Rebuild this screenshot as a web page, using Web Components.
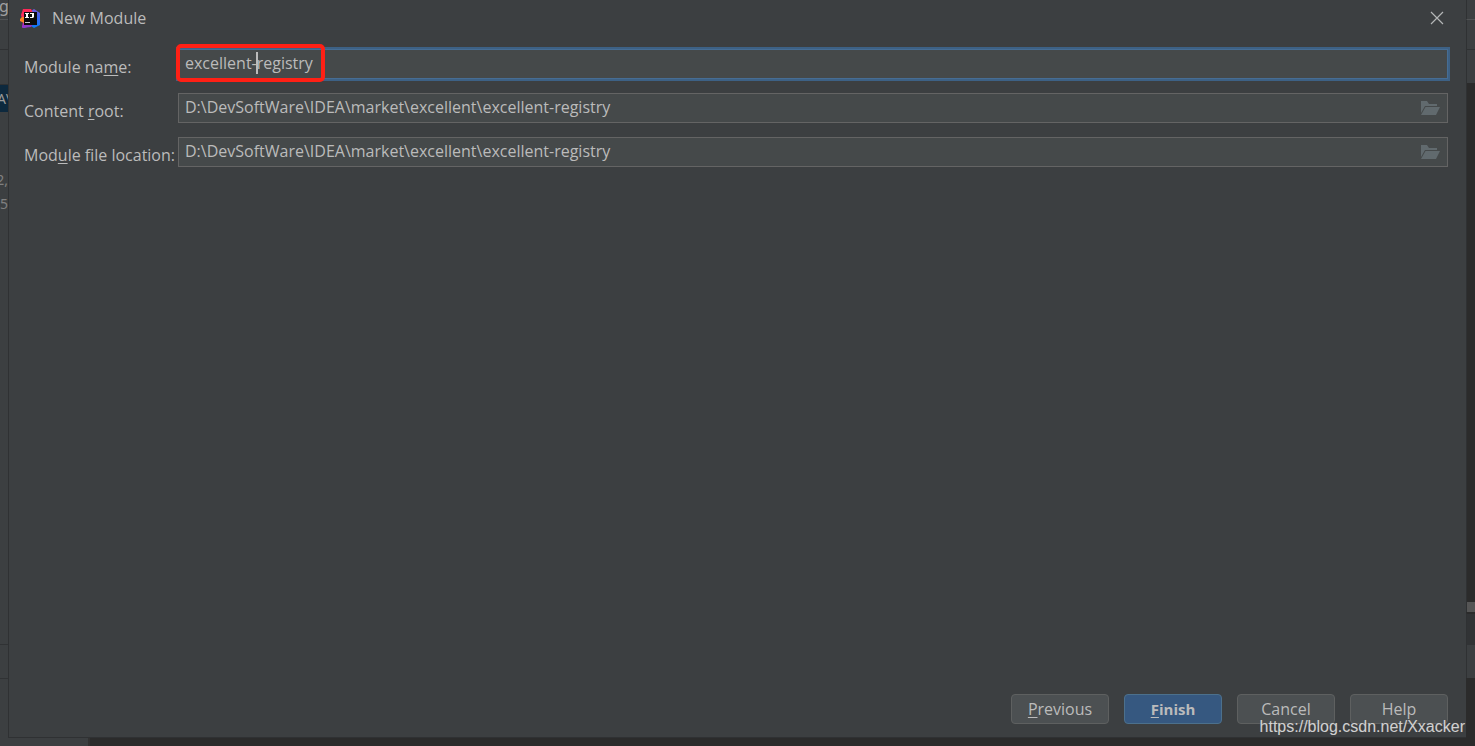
<!DOCTYPE html>
<html lang="en">
<head>
<meta charset="utf-8">
<title>New Module</title>
<style>
html, body { height: 100%; }
body { margin: 0; overflow: hidden; background: #2b2b2b; color: #bbbbbb; font: 16px/24px "Open Sans", "Noto Sans", sans-serif; }
</style>
</head>
<body>
<ide-window>
  <editor-edge slot="left"></editor-edge>
  <module-dialog heading="New Module">
    <form-field slot="fields" name="module-name" before="Module na" key="m" after="e:" value="excellent-registry" active></form-field>
    <form-field slot="fields" name="content-root" before="Content " key="r" after="oot:" value="D:\DevSoftWare\IDEA\market\excellent\excellent-registry" browse></form-field>
    <form-field slot="fields" name="file-location" before="Mod" key="u" after="le file location:" value="D:\DevSoftWare\IDEA\market\excellent\excellent-registry" browse></form-field>
    <dialog-button slot="actions"><u>P</u>revious</dialog-button>
    <dialog-button slot="actions" primary><u>F</u>inish</dialog-button>
    <dialog-button slot="actions">Cancel</dialog-button>
    <dialog-button slot="actions">Help</dialog-button>
  </module-dialog>
  <tool-edge slot="right"></tool-edge>
  <page-credit slot="credit">https://blog.csdn.net/Xxacker</page-credit>
</ide-window>
<script>
const define = (name, render) => customElements.define(name, class extends HTMLElement {
  connectedCallback() {
    if (this.shadowRoot) return;
    this.attachShadow({ mode: "open" }).innerHTML = render(this);
  }
});

define("ide-window", () => `
<style>
:host { display: grid; grid-template: 1fr 8px / 8px 1fr 9px; height: 100vh; position: relative; }
.status { grid-column: 1 / -1; background: linear-gradient(90deg, #3c3f41 88px, #323232 88px, #323232 90px, #2b2b2b 90px); }
</style>
<slot name="left"></slot><slot></slot><slot name="right"></slot><div class="status"></div><slot name="credit"></slot>`);

define("editor-edge", () => `
<style>
:host { display: flex; flex-direction: column; overflow: hidden; background: #3c3f41; color: #808080; font: 14px/20px "Noto Sans", sans-serif; }
div { flex: none; display: flex; justify-content: center; box-sizing: border-box; white-space: nowrap; }
.top { height: 20px; line-height: 12px; border-bottom: 1px solid #515355; font-size: 16px; color: #a0a0a0; }
.bar { height: 30px; border-bottom: 1px solid #2f3133; }
.tabs { height: 35px; border-bottom: 1px solid #2f3133; }
.selected { height: 27px; background: #0d293e; line-height: 27px; color: #999999; }
.tree { height: 533px; border-bottom: 1px solid #303234; flex-direction: column; justify-content: flex-start; align-items: flex-end; gap: 4px; padding-top: 58px; }
.panel { height: 34px; border-bottom: 1px solid #303234; }
</style>
<div class="top">g</div><div class="bar"></div><div class="tabs"></div>
<div class="selected">A\\</div>
<div class="tree"><span>2,</span><span>5</span></div><div class="panel"></div>`);

define("tool-edge", () => `
<style>
:host { display: flex; flex-direction: column; overflow: hidden; background: #2b2b2b; }
div { flex: none; box-sizing: border-box; background: #3c3f41; border-left: 1px solid #2f3133; }
.top { height: 20px; border-bottom: 1px solid #515355; }
.bar { height: 30px; border-bottom: 1px solid #2f3133; }
.tabs { height: 33px; }
.editor { height: 519px; background: #2b2b2b; }
.thumb { height: 10px; background: #555555; }
.header { height: 33px; background: #313335; border-top: 2px solid #2b2b2b; }
.panel { height: 33px; }
</style>
<div class="top"></div><div class="bar"></div><div class="tabs"></div><div class="editor"></div><div class="thumb"></div><div class="header"></div><div class="panel"></div>`);

define("module-dialog", el => `
<style>
:host { display: flex; flex-direction: column; min-width: 0; box-sizing: border-box; background: #3c3f41; border: solid #2f3133; border-width: 0 0 1px 1px; }
header { display: flex; align-items: center; height: 36px; padding: 0 22px 0 11px; gap: 11px; }
h1 { flex: 1; margin: 0; font-size: 16px; font-weight: 400; line-height: 24px; }
header button { all: unset; display: grid; width: 14px; height: 14px; }
.fields { display: flex; flex-direction: column; gap: 14px; padding: 13px 18px 0 15px; }
footer { display: flex; justify-content: flex-end; gap: 15px; margin-top: auto; padding: 0 18px 13px; }
</style>
<header>
  <svg width="21" height="21" viewBox="0 0 21 21" aria-hidden="true">
    <defs>
      <linearGradient id="b" x1="0" y1="0" x2="0" y2="1"><stop offset="0" stop-color="#7659d8"/><stop offset=".4" stop-color="#3e63ef"/><stop offset="1" stop-color="#087cfa"/></linearGradient>
      <linearGradient id="r" x1="0" y1="0" x2="0" y2="1"><stop offset="0" stop-color="#fe2857"/><stop offset=".5" stop-color="#fe315d"/><stop offset="1" stop-color="#af1df5"/></linearGradient>
    </defs>
    <path d="M11 3 14 1l6 4v12l-6 3-3-2z" fill="url(#b)"/>
    <path d="M3 1h8l2 4-8 4v7l5 2-6 2-2-1 1-5L1 7z" fill="url(#r)"/>
    <path d="M0 11l2-2h2v6l-4-2z" fill="#fd8224"/>
    <path d="M4 16h9l-2 3-9 1z" fill="#8b3bc8"/>
    <path d="M4 4h13v13H4z" fill="#0c0c0c"/>
    <path d="M5 5h4v1H8v3h1v1H5V9h1V6H5zM10 5h4v4l-1 1h-3V9h2V6h-2z" fill="#fff"/>
    <path d="M5 14h5v1H5z" fill="#ccc"/>
  </svg>
  <h1>${el.getAttribute("heading")}</h1>
  <button type="button" aria-label="Close"><svg width="14" height="14" viewBox="0 0 14 14"><path d="M1 1l12 12M13 1L1 13" stroke="#b4b6b7" stroke-width="1.200"/></svg></button>
</header>
<div class="fields"><slot name="fields"></slot></div>
<footer><slot name="actions"></slot></footer>`);

define("form-field", el => {
  const a = n => el.getAttribute(n);
  return `
<style>
:host { display: grid; grid-template-columns: 154px 1fr; height: 30px; line-height: 24px; }
label { padding-top: 6px; white-space: nowrap; }
u { text-underline-offset: 2px; text-decoration-thickness: 1px; text-decoration-skip-ink: none; }
.box { position: relative; display: flex; align-items: center; box-sizing: border-box; min-width: 0; border: 1px solid #646464; background: #45494a; }
:host([active]) .box { border-color: #466d94; outline: 2px solid #3d6185; }
input { flex: 1; min-width: 0; height: 28px; box-sizing: border-box; border: 0; outline: 0; padding: 0 6px 2px; background: none; color: inherit; font: inherit; }
button { all: unset; display: grid; margin-right: 7px; }
.mark { position: absolute; left: -3px; top: -6px; width: 141px; height: 30px; border: 4px solid #ff2015; border-radius: 5px; }
.caret { position: absolute; left: 77px; top: 2px; width: 2px; height: 22px; background: #bbbbbb; }
</style>
<label for="field">${a("before")}<u>${a("key")}</u>${a("after")}</label>
<div class="box">
  <input id="field" name="${a("name")}" type="text" spellcheck="false" value="${a("value")}">
  ${el.hasAttribute("browse") ? `<button type="button" aria-label="Browse"><svg width="20" height="16" viewBox="0 0 20 16"><path d="M1 1h6l2 3h8v2H5L1 13zM5.500 7H20l-4 8H1z" fill="#616a6e"/></svg></button>` : ""}
  ${el.hasAttribute("active") ? `<span class="caret"></span><span class="mark"></span>` : ""}
</div>`;
});

define("dialog-button", () => `
<style>
:host { display: block; }
button { box-sizing: border-box; width: 98px; height: 30px; padding: 0; border: 1px solid #5e6060; border-radius: 4px; background: #4c5052; color: #bbbbbb; font: inherit; }
:host([primary]) button { background: #365880; border-color: #4c708c; font-size: 15px; font-weight: 700; }
::slotted(u) { text-underline-offset: 2px; text-decoration-thickness: 1px; }
</style>
<button type="button"><slot></slot></button>`);

define("page-credit", () => `
<style>
:host { position: absolute; right: 10px; bottom: 9px; color: #d0d0d0; font: 16px/20px "Liberation Sans", Arial, sans-serif; pointer-events: none; text-shadow: 0 0 1px #555555; }
</style><slot></slot>`);
</script>
</body>
</html>
